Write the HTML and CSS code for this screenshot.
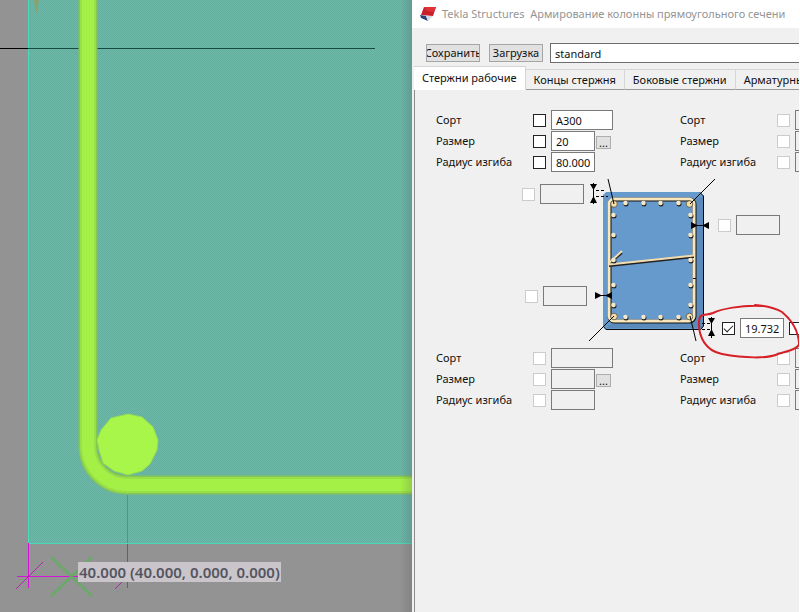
FILE: index.html
```html
<!DOCTYPE html>
<html lang="ru">
<head>
<meta charset="utf-8">
<title>Tekla Structures</title>
<link rel="stylesheet" href="styles.css">
</head>
<body>
<main class="workspace">
  <section class="model">
    <svg class="scene" viewBox="0 0 412 612" preserveAspectRatio="xMinYMin slice" aria-hidden="true">
      <defs>
        <pattern id="dither" width="2" height="2" patternUnits="userSpaceOnUse">
          <rect width="2" height="2" fill="#6cb8a7"/>
          <rect width="1" height="1" fill="#65afa1"/>
          <rect x="1" y="1" width="1" height="1" fill="#65afa1"/>
        </pattern>
        <linearGradient id="shade">
          <stop offset="0" stop-color="#444" stop-opacity="0"/>
          <stop offset="1" stop-color="#444" stop-opacity=".2"/>
        </linearGradient>
      </defs>
      <rect width="412" height="612" fill="#939393"/>
      <rect x="28" width="384" height="543" fill="url(#dither)"/>
      <path d="M28.500 0V543.500H412" fill="none" stroke="#4fd8b8"/>
      <path d="M0 48.500H28" stroke="#000"/>
      <path d="M28 48.500H375" stroke="#174a3f"/>
      <path d="M34 0L36.500 14L39 0Z" fill="#9a9a55" opacity=".7"/>
      <g fill="none">
        <path d="M88 0V446A39 39 0 0 0 127 485H412" stroke="#86c653" stroke-width="19"/>
        <path d="M88 0V446A39 39 0 0 0 127 485H412" stroke="#99df48" stroke-width="16"/>
        <path d="M88 0V446A39 39 0 0 0 127 485H412" stroke="#a5f046" stroke-width="12"/>
      </g>
      <polygon points="128,414 142,417 153,427 158,440 157,450 150,464 142,471 128,475 114,471 103,463 99,450 97,440 101,430 111,418" fill="#a9f64a" stroke="#94dc55"/>
      <rect x="127" y="495" width="1" height="48" fill="#8c6cc0"/>
      <rect x="28" y="543" width="1" height="45" fill="#d414d4"/>
      <rect x="127" y="544" width="1" height="44" fill="#d414d4"/>
      <rect x="17" y="576" width="66" height="1" fill="#d414d4"/>
      <path d="M16 589L43 562M115 589L142 562" stroke="#b024b0" fill="none"/>
      <path d="M51 557L92 596M92 557L51 596" stroke="#5fae5f" stroke-width="3" opacity=".75" fill="none"/>
      <rect x="400" width="12" height="612" fill="url(#shade)"/>
    </svg>
    <output class="measure">40.000 (40.000, 0.000, 0.000)</output>
  </section>

  <section class="dialog">
    <header class="titlebar">
      <svg class="logo" viewBox="0 0 16 16" aria-hidden="true">
        <path d="M4 1L16 1L13 10L1 9Z" fill="#c91f2b"/>
        <path d="M4 1L16 1L14 6L7 5Z" fill="#dc3238"/>
        <path d="M0 9L6 10L8 15L1 12Z" fill="#26437a"/>
        <path d="M6 10L13 10L8 15Z" fill="#d5dae4"/>
      </svg>
      <h1>Tekla Structures&nbsp; Армирование колонны прямоугольного сечени</h1>
    </header>
    <div class="toolbar">
      <button type="button" class="command"><span>Сохранить</span></button>
      <button type="button" class="command"><span>Загрузка</span></button>
      <input class="preset" type="text" value="standard" aria-label="Загрузка">
    </div>
    <nav class="tabs" role="tablist">
      <button type="button" role="tab" class="tab active" aria-selected="true">Стержни рабочие</button>
      <button type="button" role="tab" class="tab">Концы стержня</button>
      <button type="button" role="tab" class="tab">Боковые стержни</button>
      <button type="button" role="tab" class="tab">Арматурны</button>
    </nav>
    <div class="panel" role="tabpanel">
      <div class="groups">
        <div class="group">
          <div class="row"><label for="g1">Сорт</label><input type="checkbox" aria-label="Сорт"><input id="g1" class="field wide" type="text" value="A300"></div>
          <div class="row"><label for="s1">Размер</label><input type="checkbox" aria-label="Размер"><input id="s1" class="field" type="text" value="20"><button type="button" class="more">...</button></div>
          <div class="row"><label for="r1">Радиус изгиба</label><input type="checkbox" aria-label="Радиус изгиба"><input id="r1" class="field" type="text" value="80.000"></div>
        </div>
        <div class="group">
          <div class="row"><label for="g2">Сорт</label><input type="checkbox" disabled aria-label="Сорт"><input id="g2" class="field wide" type="text" disabled></div>
          <div class="row"><label for="s2">Размер</label><input type="checkbox" disabled aria-label="Размер"><input id="s2" class="field" type="text" disabled></div>
          <div class="row"><label for="r2">Радиус изгиба</label><input type="checkbox" disabled aria-label="Радиус изгиба"><input id="r2" class="field" type="text" disabled></div>
        </div>
      </div>

      <div class="section-view">
        <div class="side left">
          <div class="row"><input type="checkbox" disabled aria-label="Верх"><input class="field" type="text" disabled aria-label="Верх"></div>
          <div class="row"><input type="checkbox" disabled aria-label="Слева"><input class="field" type="text" disabled aria-label="Слева"></div>
        </div>
        <svg class="column" viewBox="589 172 127 176" aria-hidden="true">
          <path d="M606 192H700L704 196V326L701 330H606L603 326V195Z" fill="#6699cc"/>
          <path d="M694 200L703 196V328H606L614 321H694Z" fill="#5b8abc"/>
          <path d="M700 192.500L703.500 196V326L700.500 329.500H606L603 326" fill="none" stroke="#0a0a0a"/>
          <rect x="609.500" y="199.500" width="85" height="122" rx="5" fill="#6699cc" stroke="#111" stroke-width="4"/>
          <rect x="609" y="199" width="85" height="122" rx="5" fill="none" stroke="#f8e6bd" stroke-width="3"/>
          <path d="M609 266L694 257M610 263L622 253" stroke="#222" stroke-width="2"/>
          <path d="M609 264.500L694 255.500M609 263L622 251" stroke="#f2dcae" stroke-width="2"/>
          <path d="M693 278.500H696" stroke="#111"/>
          <g fill="#222">
            <circle cx="626" cy="204" r="2.500"/><circle cx="644" cy="204" r="2.500"/><circle cx="661" cy="204" r="2.500"/><circle cx="679" cy="204" r="2.500"/>
            <circle cx="626" cy="318" r="2.500"/><circle cx="644" cy="318" r="2.500"/><circle cx="661" cy="318" r="2.500"/><circle cx="679" cy="318" r="2.500"/>
            <circle cx="614" cy="216" r="2.500"/><circle cx="614" cy="236" r="2.500"/><circle cx="614" cy="261" r="2.500"/><circle cx="614" cy="286" r="2.500"/><circle cx="614" cy="306" r="2.500"/>
            <circle cx="691" cy="216" r="2.500"/><circle cx="691" cy="236" r="2.500"/><circle cx="691" cy="261" r="2.500"/><circle cx="691" cy="286" r="2.500"/><circle cx="691" cy="306" r="2.500"/>
          </g>
          <g fill="#f5e8c8">
            <circle cx="625.500" cy="203" r="2.300"/><circle cx="643.500" cy="203" r="2.300"/><circle cx="660.500" cy="203" r="2.300"/><circle cx="678.500" cy="203" r="2.300"/>
            <circle cx="625.500" cy="317" r="2.300"/><circle cx="643.500" cy="317" r="2.300"/><circle cx="660.500" cy="317" r="2.300"/><circle cx="678.500" cy="317" r="2.300"/>
            <circle cx="613.500" cy="215" r="2.300"/><circle cx="613.500" cy="235" r="2.300"/><circle cx="613.500" cy="260" r="2.300"/><circle cx="613.500" cy="285" r="2.300"/><circle cx="613.500" cy="305" r="2.300"/>
            <circle cx="690.500" cy="215" r="2.300"/><circle cx="690.500" cy="235" r="2.300"/><circle cx="690.500" cy="260" r="2.300"/><circle cx="690.500" cy="285" r="2.300"/><circle cx="690.500" cy="305" r="2.300"/>
          </g>
          <g fill="#f5dda8" stroke="#4a4436" stroke-width=".7">
            <circle cx="614" cy="204" r="3.300"/><circle cx="689.500" cy="204" r="3.300"/><circle cx="614" cy="316.500" r="3.300"/><circle cx="689.500" cy="316.500" r="3.300"/>
          </g>
          <path d="M608 179L614 204M715 179L690 204M589 341L614 316M690 316L696 341" stroke="#000" fill="none"/>
          <g stroke="#000" fill="none">
            <path d="M593.500 183V204M691 225.500H709M595 295.500H612M711.500 317V338"/>
            <path d="M596 190.500H604M596 196.500H608M702 323.500H711M702 329.500H711" stroke-dasharray="3 2"/>
          </g>
          <path d="M590 184H597L593.500 190ZM590 203H597L593.500 196ZM691 222V229L698 225.500ZM709 222V229L702 225.500ZM595 292V299L602 295.500ZM612 292V299L605 295.500ZM708 318H715L711.500 324ZM708 336H715L711.500 329Z"/>
        </svg>
        <div class="side right">
          <div class="row"><input type="checkbox" disabled aria-label="Справа"><input class="field" type="text" disabled aria-label="Справа"></div>
          <div class="row"><input type="checkbox" checked aria-label="Низ"><input class="field" type="text" value="19.732" aria-label="Низ"><input class="next" type="checkbox" aria-label="Далее"></div>
        </div>
        <svg class="markup" viewBox="696 300 104 62" aria-hidden="true">
          <path d="M762 306C741 305 721 309 713 313C706 316 700 312 699 321C698 337 706 351 722 354C744 358 767 359 778 354C789 351 800 348 799 343C798 327 788 317 782 312C775 308 767 306 755 305" fill="none" stroke="#d61f26" stroke-width="2" stroke-linecap="round"/>
        </svg>
      </div>

      <div class="groups">
        <div class="group">
          <div class="row"><label for="g3">Сорт</label><input type="checkbox" disabled aria-label="Сорт"><input id="g3" class="field wide" type="text" disabled></div>
          <div class="row"><label for="s3">Размер</label><input type="checkbox" disabled aria-label="Размер"><input id="s3" class="field" type="text" disabled><button type="button" class="more">...</button></div>
          <div class="row"><label for="r3">Радиус изгиба</label><input type="checkbox" disabled aria-label="Радиус изгиба"><input id="r3" class="field" type="text" disabled></div>
        </div>
        <div class="group">
          <div class="row"><label for="g4">Сорт</label><input type="checkbox" disabled aria-label="Сорт"><input id="g4" class="field wide" type="text" disabled></div>
          <div class="row"><label for="s4">Размер</label><input type="checkbox" disabled aria-label="Размер"><input id="s4" class="field" type="text" disabled></div>
          <div class="row"><label for="r4">Радиус изгиба</label><input type="checkbox" disabled aria-label="Радиус изгиба"><input id="r4" class="field" type="text" disabled></div>
        </div>
      </div>
    </div>
  </section>
</main>
</body>
</html>
```
FILE: styles.css
```css
* { box-sizing: border-box; }

body {
  margin: 0;
  background: #939393;
  color: #111;
  font: 11px/16px "Noto Sans", "Open Sans", sans-serif;
}

button, input { font: inherit; color: inherit; margin: 0; }

.workspace {
  display: grid;
  grid-template-columns: minmax(0, 412fr) minmax(0, 388fr);
  min-height: 100vh;
  overflow: hidden;
}

/* Model view */
.model { position: relative; overflow: hidden; }
.scene { display: block; width: 100%; height: 100%; }
.measure {
  position: absolute;
  left: 78px;
  top: 562px;
  padding: 0 1px;
  background: #c9c5cb;
  color: #55555f;
  font: 600 15px/20px "Noto Sans", sans-serif;
  white-space: nowrap;
}

/* Dialog */
.dialog {
  display: flex;
  flex-direction: column;
  min-width: 0;
  overflow: hidden;
  padding-left: 2px;
  background: #f0f0f0;
  border-right: 1px solid #fff;
}
.titlebar {
  display: flex;
  align-items: center;
  gap: 6px;
  height: 28px;
  margin-left: -2px;
  padding-left: 8px;
  background: #fff;
}
.logo { flex: none; width: 16px; height: 16px; }
h1 {
  margin: 0;
  color: #959595;
  font-size: 11px;
  font-weight: 400;
  line-height: 16px;
  white-space: nowrap;
}
.toolbar { display: flex; align-items: center; padding: 15px 0 3px 12px; }
.command {
  display: flex;
  justify-content: center;
  flex: none;
  width: 54px;
  height: 18px;
  margin-right: 9px;
  padding: 0;
  border: 1px solid #a5a5a5;
  background: #e1e1e1;
  line-height: 16px;
  white-space: nowrap;
  overflow: hidden;
}
.preset {
  flex: 1;
  min-width: 0;
  height: 20px;
  margin-left: -2px;
  padding: 0 4px;
  border: 1px solid #6e6e6e;
  border-right: 0;
  background: #fff;
}

.tabs { display: flex; align-items: flex-end; height: 24px; overflow: hidden; }
.tab {
  flex: none;
  height: 21px;
  padding: 0 8px;
  border: 1px solid #d5d5d5;
  border-left: 0;
  border-bottom-color: #999;
  background: #f0f0f0;
  line-height: 18px;
  white-space: nowrap;
}
.tab.active {
  height: 24px;
  border-bottom-color: #fff;
  background: #fff;
}

.panel { flex: 1; padding-top: 20px; border-left: 1px solid #8c8c8c; }
.groups { display: flex; padding-left: 21px; }
.group { display: flex; flex: none; flex-direction: column; gap: 1px; width: 244px; }
.row { display: flex; align-items: center; height: 20px; }
.row label { width: 97px; }

input[type="checkbox"] {
  appearance: none;
  flex: none;
  width: 13px;
  height: 13px;
  margin-right: 5px;
  border: 1px solid #222;
  background: #fff;
}
input[type="checkbox"]:disabled { border-color: #ccc; }
input[type="checkbox"]:checked::before {
  content: "";
  display: block;
  width: 8px;
  height: 4px;
  margin: 2px 1px;
  border: solid #222;
  border-width: 0 0 1px 1px;
  transform: rotate(-45deg);
}
.field {
  flex: none;
  width: 44px;
  height: 20px;
  padding: 0 4px;
  border: 1px solid #7a7a7a;
  background: #fff;
}
.field.wide { width: 62px; }
.field:disabled { background: #f0f0f0; }
.more {
  width: 15px;
  height: 13px;
  margin: 2px 0 0 1px;
  padding: 0;
  border: 1px solid #adadad;
  background: #e1e1e1;
  line-height: 9px;
}

/* Column cross-section with its cover fields */
.section-view {
  position: relative;
  display: grid;
  grid-template-columns: 174px 127px 1fr;
  height: 176px;
}
.column { display: block; width: 127px; height: 176px; }
.side { display: flex; flex-direction: column; }
.left { align-items: flex-end; gap: 82px; padding: 12px 2px 0 0; }
.left .row:first-child { padding-right: 3px; }
.right { gap: 83px; padding: 43px 0 0 2px; }
.right .row:last-child { padding-left: 4px; }
.side .next { margin-left: 5px; }
.markup {
  position: absolute;
  left: 281px;
  top: 128px;
  width: 104px;
  height: 62px;
  pointer-events: none;
}
```
